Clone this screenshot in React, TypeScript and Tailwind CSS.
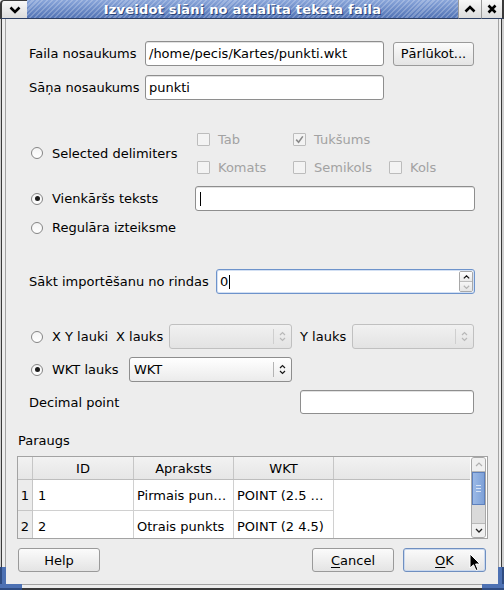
import React from "react";

// small double-chevron used by the combo boxes
function UpDown({ color }: { color: string }) {
  return (
    <svg width="7" height="11" viewBox="0 0 7 11" fill="none">
      <polyline points="1,4 3.5,1.5 6,4" stroke={color} strokeWidth="1.2" />
      <polyline points="1,7 3.5,9.5 6,7" stroke={color} strokeWidth="1.2" />
    </svg>
  );
}

function Radio({ checked }: { checked?: boolean }) {
  return (
    <span className="flex h-[12px] w-[12px] shrink-0 items-center justify-center rounded-full border border-[#858585] bg-gradient-to-b from-[#f4f4f4] to-white">
      {checked && <span className="h-[5px] w-[5px] rounded-full bg-[#1c1c1c]" />}
    </span>
  );
}

function Check({ label, checked }: { label: string; checked?: boolean }) {
  return (
    <div className="flex w-[96px] items-center gap-[8px]">
      <span className="flex h-[13px] w-[13px] items-center justify-center rounded-[1px] border border-[#bcbcbc] bg-[#f3f3f3]">
        {checked && (
          <svg width="9" height="9" viewBox="0 0 9 9" fill="none">
            <polyline points="1.2,4.6 3.6,7.2 7.8,1.4" stroke="#8a8a8a" strokeWidth="1.6" />
          </svg>
        )}
      </span>
      <span className="text-[#a2a2a2]">{label}</span>
    </div>
  );
}

function Field({ w, value, caret }: { w: string; value?: string; caret?: boolean }) {
  return (
    <div className={`${w} flex h-full items-center rounded-[3px] border border-[#8e8e8e] bg-white pl-[3px] shadow-[inset_0_1px_0_#e2e2e2]`}>
      <span>{value}</span>
      {caret && <span className="ml-px h-[14px] w-px bg-black" />}
    </div>
  );
}

function Combo({ w, value, disabled }: { w: string; value?: string; disabled?: boolean }) {
  return (
    <div
      className={`${w} flex h-full items-center rounded-[3px] border ${
        disabled
          ? "border-[#c0c0c0] bg-gradient-to-b from-[#f1f1f1] to-[#e3e3e3]"
          : "border-[#8e8e8e] bg-gradient-to-b from-white to-[#ebebeb]"
      }`}
    >
      <span className="flex-1 pl-[4px]">{value}</span>
      <span className={`h-[15px] w-px ${disabled ? "bg-[#cfcfcf]" : "bg-[#b4b4b4]"}`} />
      <span className="flex w-[17px] justify-center">
        <UpDown color={disabled ? "#b8b8b8" : "#1a1a1a"} />
      </span>
    </div>
  );
}

function Btn({ w, children, focus }: { w: string; children: React.ReactNode; focus?: boolean }) {
  return (
    <div
      className={`${w} flex h-full items-center justify-center rounded-[3px] border bg-gradient-to-b from-[#fbfbfb] to-[#e4e4e4] ${
        focus ? "border-[#6f8fc0] shadow-[inset_0_0_0_1px_#c9d8ee]" : "border-[#9a9a9a]"
      }`}
    >
      {children}
    </div>
  );
}

function TitleButton({ children, first }: { children: React.ReactNode; first?: boolean }) {
  return (
    <div
      className={`flex h-full items-center justify-center border-b border-[#2d3f63] bg-gradient-to-b from-[#f8f8f8] to-[#dcdcdc] ${
        first ? "w-[27px] rounded-tl-[4px] border-l-2 border-t border-l-[#3a3a3a] border-t-[#3a3a3a]" : "w-[23px] border-l border-l-[#9a9a9a]"
      }`}
    >
      {children}
    </div>
  );
}

const cols = [
  { name: "ID", w: "w-[101px]" },
  { name: "Apraksts", w: "w-[100px]" },
  { name: "WKT", w: "w-[100px]" },
];

const rows = [
  ["1", "1", "Pirmais pun…", "POINT (2.5 …"],
  ["2", "2", "Otrais punkts", "POINT (2 4.5)"],
];

function Table() {
  return (
    <div className="ml-[11px] flex h-[83px] w-[471px] overflow-hidden border border-[#a3a3a3] bg-white">
      <div className="flex w-[452px] flex-col overflow-hidden">
        <div className="flex h-[23px] shrink-0 border-b border-[#bdbdbd] bg-gradient-to-b from-[#f2f2f2] to-[#e6e6e6]">
          <div className="w-[15px] border-r border-[#c6c6c6]" />
          {cols.map((c) => (
            <div key={c.name} className={`${c.w} flex items-center justify-center border-r border-[#c6c6c6]`}>
              {c.name}
            </div>
          ))}
        </div>
        {rows.map((r) => (
          <div key={r[0]} className="flex h-[31px] shrink-0">
            <div className="flex w-[15px] items-center justify-center border-b border-r border-[#c6c6c6] bg-[#ececec]">{r[0]}</div>
            <div className="flex w-[101px] items-center border-b border-r border-[#d0d0d0] pl-[5px]">{r[1]}</div>
            <div className="flex w-[100px] items-center border-b border-r border-[#d0d0d0] pl-[3px] whitespace-nowrap">{r[2]}</div>
            <div className="flex w-[100px] items-center border-b border-r border-[#d0d0d0] pl-[3px] whitespace-nowrap">{r[3]}</div>
          </div>
        ))}
      </div>
      {/* vertical scrollbar */}
      <div className="ml-px flex w-[15px] flex-col overflow-hidden rounded-[3px] border border-[#a8a8a8] bg-[#dadada]">
        <div className="flex h-[14px] shrink-0 items-center justify-center border-b border-[#b8b8b8] bg-[#f0f0f0]">
          <svg width="8" height="5" viewBox="0 0 8 5" fill="none">
            <polyline points="1,4 4,1 7,4" stroke="#b0b0b0" strokeWidth="1.2" />
          </svg>
        </div>
        <div className="flex h-[33px] shrink-0 items-center justify-center border border-[#5d80bd] bg-gradient-to-r from-[#9bb9e6] to-[#7ea1d8]">
          <div className="flex flex-col gap-[2px]">
            <span className="h-px w-[5px] bg-[#d7e3f5]" />
            <span className="h-px w-[5px] bg-[#d7e3f5]" />
            <span className="h-px w-[5px] bg-[#d7e3f5]" />
          </div>
        </div>
        <div className="flex-1" />
        <div className="flex h-[14px] shrink-0 items-center justify-center border-t border-[#b8b8b8] bg-[#f0f0f0]">
          <svg width="8" height="5" viewBox="0 0 8 5" fill="none">
            <polyline points="1,1 4,4 7,1" stroke="#222" strokeWidth="1.3" />
          </svg>
        </div>
      </div>
    </div>
  );
}

export default function App() {
  return (
    <div className="relative flex h-[590px] w-[504px] flex-col overflow-hidden bg-[#ededed] font-['DejaVu_Sans','Noto_Sans',sans-serif] text-[13px] leading-none text-black">
      {/* title bar */}
      <div className="flex h-[19px] shrink-0">
        <TitleButton first>
          <svg width="12" height="8" viewBox="0 0 12 8" fill="none">
            <polyline points="1.5,1.5 6,6 10.5,1.5" stroke="#000" strokeWidth="2.6" />
          </svg>
        </TitleButton>
        <div className="flex flex-1 items-center justify-center border-b border-[#2d3f63] [background:repeating-linear-gradient(135deg,rgba(255,255,255,0.22)_0px,rgba(255,255,255,0.22)_1.5px,transparent_1.5px,transparent_3.5px),linear-gradient(#8aa6da,#5274b6)]">
          <span className="text-[13px] font-bold tracking-[0.2px] text-white [text-shadow:1px_1px_0_#2b4478]">
            Izveidot slāni no atdalīta teksta faila
          </span>
        </div>
        <TitleButton>
          <svg width="12" height="8" viewBox="0 0 12 8" fill="none">
            <polyline points="1.5,6.5 6,2 10.5,6.5" stroke="#000" strokeWidth="2.6" />
          </svg>
        </TitleButton>
        <div className="flex h-full w-[23px] items-center justify-center border-b border-l border-[#2d3f63] border-l-[#9a9a9a] border-r-2 border-r-[#3a3a3a] bg-gradient-to-b from-[#f8f8f8] to-[#dcdcdc]">
          <svg width="10" height="10" viewBox="0 0 10 10" fill="none">
            <path d="M1.5 1.5 L8.5 8.5 M8.5 1.5 L1.5 8.5" stroke="#000" strokeWidth="2.6" />
          </svg>
        </div>
      </div>

      <div className="flex flex-1">
        {/* left frame edge */}
        <div className="flex w-[6px] flex-col">
          <div className="flex-1 shadow-[inset_1px_0_0_#cfcfcf,inset_2px_0_0_#3a3a3a,inset_-1px_0_0_#a3a3a3]" />
          <div className="h-[17px] bg-[#4d71b3] shadow-[inset_2px_0_0_#2f4c82]" />
        </div>

        {/* dialog body */}
        <div className="flex flex-1 flex-col">
          <div className="mt-[22px] flex h-[25px] items-center">
            <span className="ml-[23px] w-[116px]">Faila nosaukums</span>
            <Field w="w-[239px]" value="/home/pecis/Kartes/punkti.wkt" />
            <div className="ml-[9px] h-[24px]">
              <Btn w="w-[81px]">Pārlūkot...</Btn>
            </div>
          </div>

          <div className="mt-[9px] flex h-[25px] items-center">
            <span className="ml-[23px] w-[116px]">Sāņa nosaukums</span>
            <Field w="w-[239px]" value="punkti" />
          </div>

          {/* delimiter choice */}
          <div className="mt-[25px] flex h-[56px]">
            <div className="ml-[25px] flex w-[164px] items-center gap-[9px]">
              <Radio />
              <span>Selected delimiters</span>
            </div>
            <div className="flex flex-col pl-[2px]">
              <div className="flex h-[28px] items-center">
                <Check label="Tab" />
                <Check label="Tukšums" checked />
              </div>
              <div className="flex h-[28px] items-center">
                <Check label="Komats" />
                <Check label="Semikols" />
                <Check label="Kols" />
              </div>
            </div>
          </div>

          <div className="mt-[5px] flex h-[25px] items-center">
            <div className="ml-[25px] flex w-[164px] items-center gap-[9px]">
              <Radio checked />
              <span>Vienkāršs teksts</span>
            </div>
            <Field w="w-[280px]" caret />
          </div>

          <div className="mt-[4px] flex h-[25px] items-center">
            <div className="ml-[25px] flex items-center gap-[9px]">
              <Radio />
              <span>Regulāra izteiksme</span>
            </div>
          </div>

          {/* start row spin box */}
          <div className="mt-[29px] flex h-[25px] items-center">
            <span className="ml-[23px] w-[187px]">Sākt importēšanu no rindas</span>
            <div className="flex h-full w-[259px] items-center rounded-[3px] border border-[#6d93cb] bg-white pl-[3px] shadow-[inset_0_0_0_1px_#d3e0f3]">
              <span>0</span>
              <span className="ml-px h-[14px] w-px bg-black" />
              <div className="ml-auto mr-[1px] flex h-[21px] w-[14px] flex-col overflow-hidden rounded-[2px] border border-[#a8a8a8]">
                <div className="flex flex-1 items-center justify-center border-b border-[#bdbdbd] bg-gradient-to-b from-white to-[#e9e9e9]">
                  <svg width="7" height="4" viewBox="0 0 7 4" fill="none">
                    <polyline points="0.8,3.4 3.5,0.8 6.2,3.4" stroke="#111" strokeWidth="1.2" />
                  </svg>
                </div>
                <div className="flex flex-1 items-center justify-center bg-gradient-to-b from-[#f6f6f6] to-[#e6e6e6]">
                  <svg width="7" height="4" viewBox="0 0 7 4" fill="none">
                    <polyline points="0.8,0.8 3.5,3.4 6.2,0.8" stroke="#b5b5b5" strokeWidth="1.2" />
                  </svg>
                </div>
              </div>
            </div>
          </div>

          {/* geometry columns */}
          <div className="mt-[30px] flex h-[25px] items-center">
            <div className="ml-[25px] flex w-[85px] items-center gap-[9px]">
              <Radio />
              <span>X Y lauki</span>
            </div>
            <span className="w-[53px]">X lauks</span>
            <Combo w="w-[123px]" disabled />
            <span className="ml-[8px] w-[52px]">Y lauks</span>
            <Combo w="w-[122px]" disabled />
          </div>

          <div className="mt-[8px] flex h-[25px] items-center">
            <div className="ml-[25px] flex w-[98px] items-center gap-[9px]">
              <Radio checked />
              <span>WKT lauks</span>
            </div>
            <Combo w="w-[163px]" value="WKT" />
          </div>

          <div className="mt-[8px] flex h-[24px] items-center">
            <span className="ml-[23px] w-[271px]">Decimal point</span>
            <Field w="w-[174px]" />
          </div>

          <div className="mt-[18px] flex h-[16px] items-center">
            <span className="ml-[12px]">Paraugs</span>
          </div>

          <div className="mt-[8px]">
            <Table />
          </div>

          <div className="mt-[9px] flex h-[24px]">
            <div className="ml-[12px]">
              <Btn w="w-[82px]">Help</Btn>
            </div>
            <div className="ml-[212px]">
              <Btn w="w-[82px]">
                <span>
                  <span className="underline underline-offset-2">C</span>ancel
                </span>
              </Btn>
            </div>
            <div className="ml-[9px]">
              <Btn w="w-[83px]" focus>
                <span>
                  <span className="underline underline-offset-2">O</span>K
                </span>
              </Btn>
            </div>
          </div>
        </div>

        {/* right frame edge */}
        <div className="flex w-[6px] flex-col">
          <div className="flex-1 shadow-[inset_1px_0_0_#a3a3a3,inset_-2px_0_0_#cfcfcf,inset_-3px_0_0_#3a3a3a]" />
          <div className="h-[17px] bg-[#4d71b3] shadow-[inset_-2px_0_0_#2f4c82]" />
        </div>
      </div>

      {/* bottom frame edge */}
      <div className="flex h-[6px] shrink-0">
        <div className="w-[22px] bg-[#4d71b3] shadow-[inset_0_-2px_0_#2f4c82]" />
        <div className="flex-1 border-b-2 border-t border-[#3a3a3a] border-t-[#a3a3a3] bg-[#ededed]" />
        <div className="w-[22px] bg-[#4d71b3] shadow-[inset_0_-2px_0_#2f4c82]" />
      </div>

      {/* mouse pointer over the OK button */}
      <svg className="absolute left-[469px] top-[553px]" width="12" height="19" viewBox="0 0 12 19">
        <path d="M1 1 L1 15 L4.5 11.8 L7 17.5 L9 16.6 L6.6 11 L11 11 Z" fill="#000" stroke="#fff" strokeWidth="1" />
      </svg>
    </div>
  );
}
